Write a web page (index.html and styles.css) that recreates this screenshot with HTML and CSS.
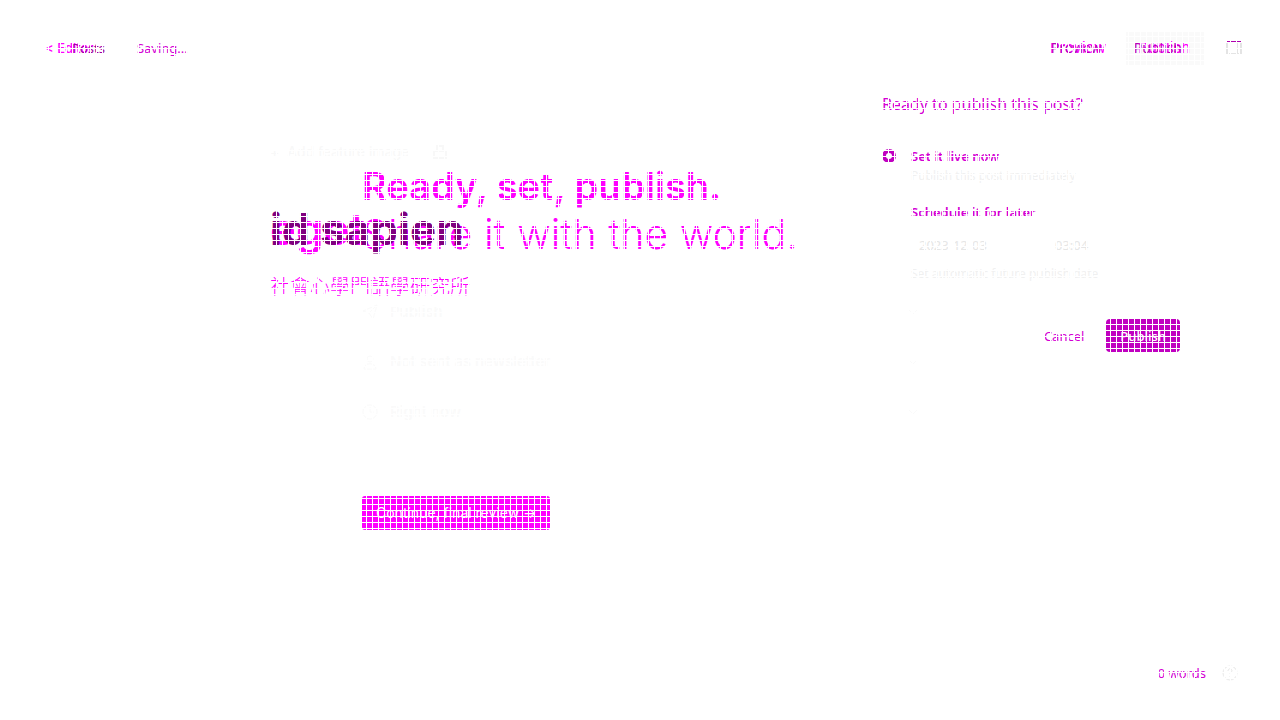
FILE: index.html
```html
<!DOCTYPE html>
<html lang="en">
<head>
<meta charset="utf-8">
<title>Editor – Publish</title>
<link rel="stylesheet" href="styles.css">
</head>
<body>
<div class="screen">
  <section class="layer flow">
    <header class="bar">
      <a class="back strong" href="#">&lt; Editor</a>
      <nav class="actions strong"><button>Preview</button><button class="soft">Publish</button></nav>
    </header>
    <div class="review">
      <h1>Ready, set, publish.<br><span>Share it with the world.</span></h1>
      <ul class="options">
        <li><svg viewBox="0 0 16 16"><path d="M1 7 15 1l-4 14-4-6zM7 9l8-8"/></svg><span>Publish</span><svg class="chev" viewBox="0 0 10 6"><path d="m1 1 4 4 4-4"/></svg></li>
        <li><svg viewBox="0 0 16 16"><circle cx="8" cy="5" r="3"/><path d="M2 15c0-7 12-7 12 0z"/></svg><span>Not sent as newsletter</span><svg class="chev" viewBox="0 0 10 6"><path d="m1 1 4 4 4-4"/></svg></li>
        <li><svg viewBox="0 0 16 16"><circle cx="8" cy="8" r="7"/><path d="M8 3v5h4"/></svg><span>Right now</span><svg class="chev" viewBox="0 0 10 6"><path d="m1 1 4 4 4-4"/></svg></li>
      </ul>
      <button class="continue">Continue, final review →</button>
    </div>
  </section>

  <section class="layer editor">
    <header class="bar">
      <div class="status"><a class="back" href="#">Posts</a><span>Saving...</span></div>
      <nav class="actions"><button>Preview</button><button>Publish</button>
        <button class="toggle" aria-label="Settings"><svg viewBox="0 0 16 14"><path class="edge" d="M1 .5h14M0 13.5h2M14 13.5h2"/><path d="M1 2v11M15 2v11M11 2v11M3 13h10"/></svg></button></nav>
    </header>
    <article class="post">
      <p class="feature"><span class="plus">+</span><span>Add feature image</span><svg viewBox="0 0 14 14"><path d="M1 13V6h12v7zM4 6V1h6v5"/></svg></p>
      <h2 class="title"><span class="ghost">eget</span><span>id sapien</span></h2>
      <p class="excerpt" lang="zh-Hant">社會心學門語學研究所</p>
    </article>
    <footer class="count"><span>0 words</span><svg viewBox="0 0 16 16"><circle cx="8" cy="8" r="7"/><path d="M6 6c0-3 4-3 4 0 0 1-2 1-2 3M8 11v1"/></svg></footer>
  </section>

  <section class="layer overlay">
    <form class="popover">
      <h3>Ready to publish this post?</h3>
      <label class="choice"><input type="radio" name="when" checked><span><b>Set it live now</b><small>Publish this post immediately</small></span></label>
      <label class="choice"><input type="radio" name="when"><span><b>Schedule it for later</b></span></label>
      <div class="date"><input aria-label="Date" value="2023-12-03"><input aria-label="Time" value="03:04"></div>
      <small class="hint">Set automatic future publish date</small>
      <div class="buttons"><button type="button">Cancel</button><button type="button" class="primary">Publish</button></div>
    </form>
  </section>
  <div class="layer mesh"></div>
</div>
</body>
</html>
```
FILE: styles.css
```css
* { box-sizing: border-box; }
body { margin: 0; background: #fff; font-family: Inter, "Noto Sans CJK TC", sans-serif; font-size: 13px; line-height: 16px; color: #d400d4; }
h1, h2, h3, p, ul { margin: 0; padding: 0; }
button, input { font: inherit; color: inherit; background: none; border: 0; padding: 0; }
a { color: inherit; text-decoration: none; }
svg { fill: none; stroke: currentColor; flex: none; }

.screen { display: grid; min-height: 100vh; }
.layer { grid-area: 1 / 1; min-width: 0; }
.mesh {
  pointer-events: none;
  background:
    repeating-linear-gradient(90deg, #fff 0 1px, transparent 1px 6px),
    repeating-linear-gradient(#fff 0 1px, transparent 1px 6px);
}

.bar { display: flex; justify-content: space-between; align-items: center; height: 96px; padding: 0 38px 0 45px; }
.actions { display: flex; align-items: center; gap: 32px; }
.strong { color: #f0f; font-weight: 500; }

.flow .bar { padding-right: 76px; }
.flow .actions { gap: 20px; font-size: 15px; font-weight: 400; }
.soft { background: #fafafa; height: 33px; padding: 0 14px 0 12px; }
.review { margin: 66px 362px 0; }
.review h1 { color: #f0f; font-size: 38px; line-height: 48px; font-weight: 600; white-space: nowrap; }
.review h1 span { font-size: 41px; font-weight: 300; }
.options { list-style: none; color: #fafafa; padding-top: 28px; font-size: 15px; font-weight: 500; }
.options li { display: flex; align-items: center; gap: 12px; height: 50px; }
.options svg { width: 16px; height: 16px; }
.options .chev { width: 10px; height: 6px; margin-left: auto; }
.continue { margin-top: 59px; height: 34px; padding: 0 14px; border-radius: 3px; background: #f0f; color: #fff; font-size: 14px; font-weight: 400; white-space: nowrap; }

.editor { display: flex; flex-direction: column; font-family: "Noto Sans", "Noto Sans CJK TC", sans-serif; }
.editor .bar { padding-left: 72px; }
.status { display: flex; gap: 32px; }
.status .back { color: #a000a0; }
.editor .actions { color: #b800b8; font-size: 14px; }
.toggle { margin-left: 12px; color: #e4e4e4; height: 14px; }
.toggle svg { display: block; width: 16px; height: 14px; stroke-width: 2; }
.toggle .edge { stroke: #b000b0; stroke-width: 1; }
.post { margin: 48px 270px 0; }
.feature { display: flex; align-items: center; gap: 8px; color: #f8f8f8; font-family: Inter, sans-serif; font-size: 14px; }
.feature svg { width: 14px; height: 14px; margin-left: 16px; stroke-width: 2; }
.title { display: grid; color: #800080; font-family: Inter, sans-serif; font-size: 44px; line-height: 52px; font-weight: 700; padding-top: 43px; }
.title span { grid-area: 1 / 1; }
.title .ghost { color: #f0f; font-weight: 600; }
.excerpt { font-family: "Noto Sans CJK TC", sans-serif; font-size: 20px; line-height: 24px; color: #f0f; font-weight: 300; padding-top: 19px; }
.count { margin-top: auto; display: flex; align-items: center; justify-content: flex-end; gap: 16px; padding: 0 42px 39px; }
.count svg { width: 16px; height: 16px; color: #e8e8e8; }

.overlay { display: flex; justify-content: flex-end; align-items: flex-start; font-family: "Noto Sans", sans-serif; }
.popover { margin: 92px 100px 0 0; width: 298px; }
.popover h3 { font-size: 16px; line-height: 24px; font-weight: 400; }
.choice { display: flex; gap: 15px; margin-top: 32px; }
.choice + .choice { margin-top: 18px; }
.choice b { display: block; font-weight: 600; }
small { display: block; font-family: "Open Sans", sans-serif; font-size: 12px; line-height: 20px; color: #f0f0f0; margin-top: 2px; }
.choice input { appearance: none; width: 14px; height: 14px; margin: 1px 0; border-radius: 50%; }
.choice input:checked { border: 4px solid #c000c0; }
.date { display: flex; justify-content: space-between; margin: 16px 85px 0 37px; color: #e6e6e6; }
.date input { width: 90px; height: 18px; }
.date input + input { width: 40px; }
.hint { margin: 10px 0 0 29px; }
.buttons { display: flex; justify-content: flex-end; align-items: center; gap: 22px; margin-top: 35px; }
.primary { height: 33px; padding: 0 14px; border-radius: 4px; background: #c000c0; color: #fff; font-weight: 500; }
```
